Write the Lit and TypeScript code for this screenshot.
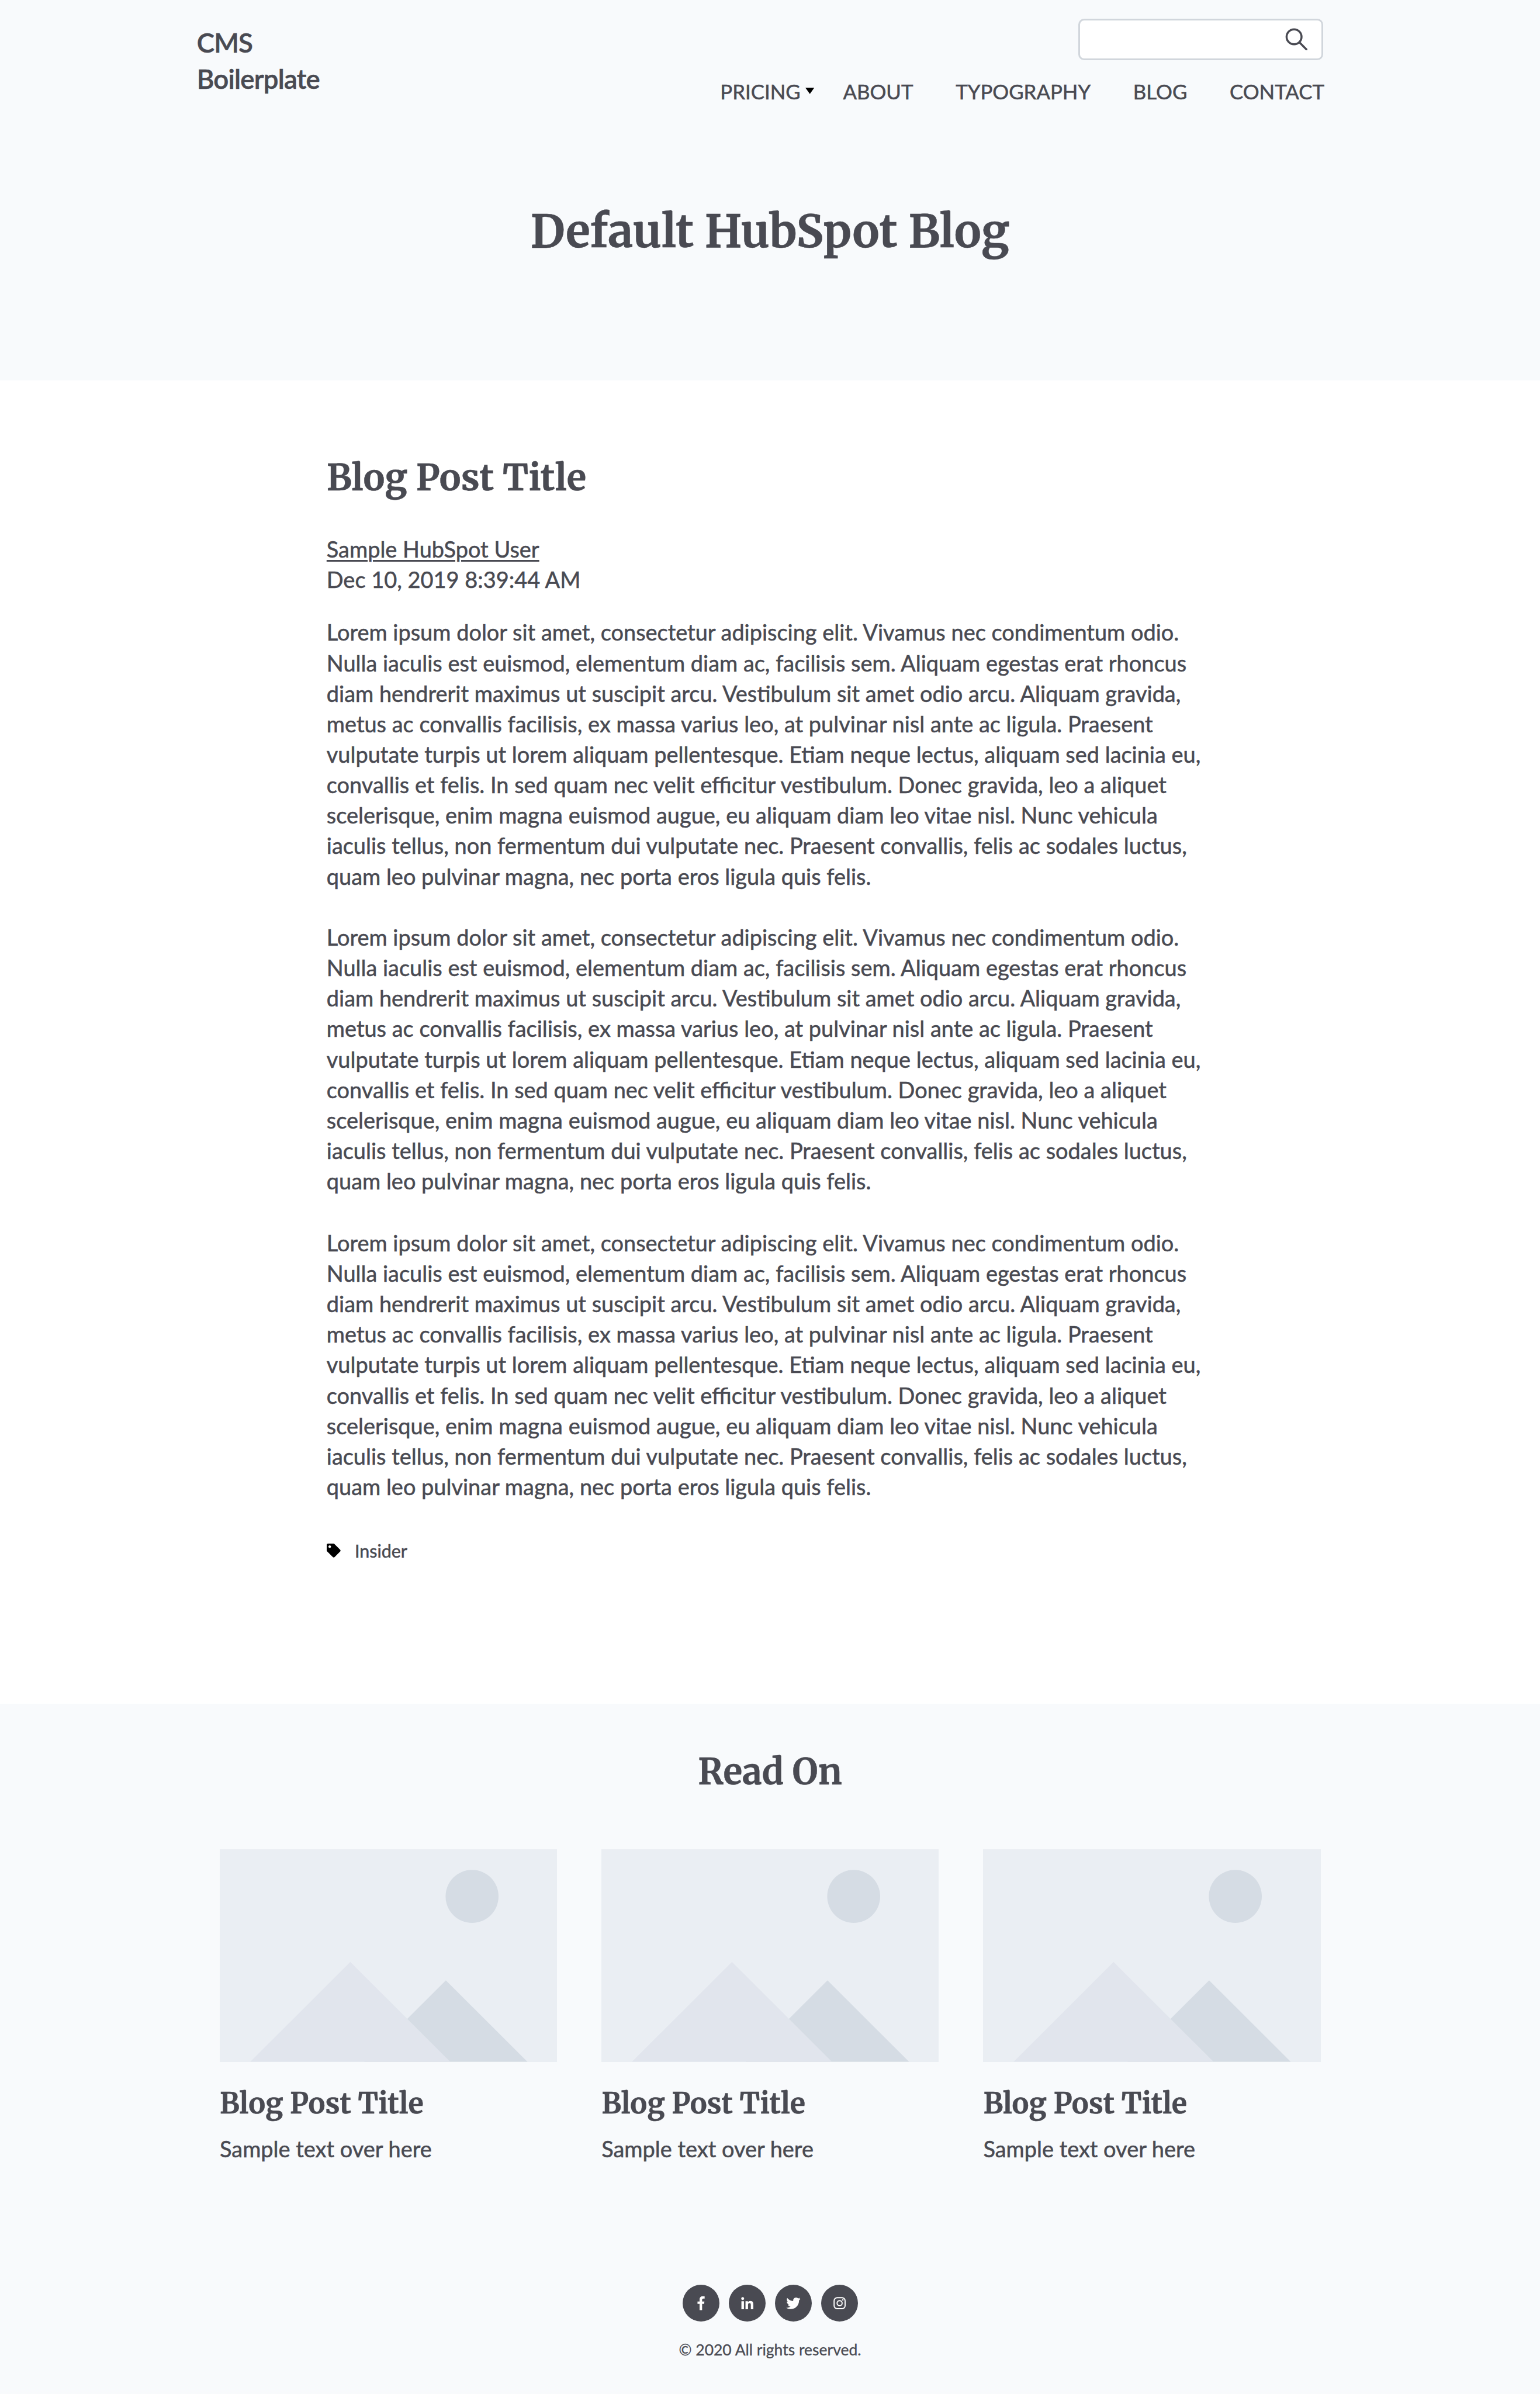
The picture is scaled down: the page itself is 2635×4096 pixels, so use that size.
import { LitElement, html, svg, css } from "lit";
import { customElement } from "lit/decorators.js";

const PARAGRAPH =
  "Lorem ipsum dolor sit amet, consectetur adipiscing elit. Vivamus nec condimentum odio. Nulla iaculis est euismod, elementum diam ac, facilisis sem. Aliquam egestas erat rhoncus diam hendrerit maximus ut suscipit arcu. Vestibulum sit amet odio arcu. Aliquam gravida, metus ac convallis facilisis, ex massa varius leo, at pulvinar nisl ante ac ligula. Praesent vulputate turpis ut lorem aliquam pellentesque. Etiam neque lectus, aliquam sed lacinia eu, convallis et felis. In sed quam nec velit efficitur vestibulum. Donec gravida, leo a aliquet scelerisque, enim magna euismod augue, eu aliquam diam leo vitae nisl. Nunc vehicula iaculis tellus, non fermentum dui vulputate nec. Praesent convallis, felis ac sodales luctus, quam leo pulvinar magna, nec porta eros ligula quis felis.";

const SOCIAL = [
  svg`<path transform="translate(32.2 25) scale(0.0586)" d="M76.7 512V283H0v-91h76.7v-71.7C76.7 42.4 124.3 0 193.8 0c33.3 0 61.9 2.5 70.2 3.6V85h-48.2c-37.8 0-45.1 18-45.1 44.3V192H256l-11.7 91h-73.6v229"/>`,
  svg`<path transform="translate(26.9 26.9) scale(0.0586)" d="M100.3 448H7.4V148.9h92.9zM53.8 108.1C24.1 108.1 0 83.5 0 53.8a53.8 53.8 0 0 1 107.6 0c0 29.7-24.1 54.3-53.8 54.3zM447.9 448h-92.7V302.4c0-34.7-.7-79.2-48.3-79.2-48.3 0-55.7 37.7-55.7 76.7V448h-92.8V148.9h89.1v40.8h1.3c12.4-23.5 42.7-48.3 87.9-48.3 94 0 111.3 61.9 111.3 142.3V448z"/>`,
  svg`<path transform="translate(24.4 24.8) scale(0.0602)" d="M459.37 151.716c.325 4.548.325 9.097.325 13.645 0 138.72-105.583 298.558-298.558 298.558-59.452 0-114.68-17.219-161.137-47.106 8.447.974 16.568 1.299 25.34 1.299 49.055 0 94.213-16.568 130.274-44.832-46.132-.975-84.792-31.188-98.112-72.772 6.498.974 12.995 1.624 19.818 1.624 9.421 0 18.843-1.3 27.614-3.573-48.081-9.747-84.143-51.98-84.143-102.985v-1.299c13.969 7.797 30.214 12.67 47.431 13.319-28.264-18.843-46.781-51.005-46.781-87.391 0-19.492 5.197-37.36 14.294-52.954 51.655 63.675 129.3 105.258 216.365 109.807-1.624-7.797-2.599-15.918-2.599-24.04 0-57.828 46.782-104.934 104.934-104.934 30.213 0 57.502 12.67 76.67 33.137 23.715-4.548 46.456-13.32 66.599-25.34-7.798 24.366-24.366 44.833-46.132 57.827 21.117-2.273 41.584-8.122 60.426-16.243-14.292 20.791-32.161 39.308-52.628 54.253z"/>`,
  svg`<g fill="none" stroke="#fff" stroke-width="2.4"><rect x="28.1" y="28.1" width="23.8" height="23.8" rx="6.6"/><circle cx="40" cy="40" r="5.5"/></g><circle cx="47" cy="33" r="1.6"/>`,
];

@customElement("app-root")
export class AppRoot extends LitElement {
  static styles = css`
    :host {
      display: block;
      width: 2635px;
      height: 4096px;
      overflow: hidden;
      background: #fff;
      color: #494a52;
      font-family: Lato, Carlito, sans-serif;
      font-size: 37.94px;
      line-height: 52.16px;
      -webkit-text-stroke: .55px #494a52;
    }
    * { box-sizing: border-box; margin: 0; }
    h1, h2, h3 {
      font-family: Merriweather, "Noto Serif", serif;
      font-weight: 700;
      -webkit-text-stroke-width: .45px;
    }
    .header { height: 651px; background: #f8fafc; }
    .bar {
      display: flex;
      justify-content: space-between;
      height: 330px;
      padding: 31.6px 369px 0 336.7px;
    }
    .logo {
      width: 230px;
      padding-top: 10.8px;
      font-size: 45.6px;
      font-weight: 600;
      line-height: 61.65px;
      letter-spacing: -.8px;
    }
    .tools { display: flex; flex-direction: column; align-items: flex-end; }
    .search {
      display: flex;
      justify-content: flex-end;
      align-items: center;
      width: 419px;
      height: 71px;
      margin-right: 2.5px;
      padding-right: 23.5px;
      background: #fff;
      border: 3px solid #d1d6dc;
      border-radius: 10px;
    }
    .search svg { width: 39.5px; height: 39.5px; margin-top: -1px; }
    .nav { display: flex; gap: 72.7px; margin-top: 28.6px; font-size: 34.8px; line-height: 52px; }
    .item { position: relative; }
    .caret { position: absolute; left: calc(100% + 8px); top: 19px; width: 15.4px; height: 10.8px; }
    .h1 { text-align: center; font-size: 77.4px; line-height: 108px; padding-top: 12.4px; }
    .post { height: 2264px; padding: 129.4px 0 0 558.8px; }
    .h2 { font-size: 61.8px; line-height: 74px; }
    .author { margin-top: 59.3px; }
    .user { text-decoration: underline; text-decoration-thickness: 3px; text-underline-offset: 3.6px; }
    .body { width: 1522px; margin-top: 38.4px; }
    .body p + p { margin-top: 52.16px; }
    .body p:last-child { margin-top: 53.4px; }
    .tag {
      display: flex;
      align-items: center;
      gap: 24px;
      margin-top: 55.8px;
      margin-left: .6px;
      font-size: 30.4px;
      line-height: 54px;
    }
    .tag svg { width: 23.7px; height: 23.7px; fill: #000; }
    .more { height: 1181px; background: #f8fafc; }
    .h2c { text-align: center; padding-top: 80px; font-size: 60.4px; line-height: 74px; }
    .cards { display: flex; gap: 76px; padding: 95.3px 0 0 376px; }
    .card { width: 577.2px; }
    .pic { display: block; width: 577.2px; height: 363.6px; background: #eaeef3; }
    .h3 { margin-top: 37.5px; font-size: 48.5px; line-height: 68px; }
    .text { margin-top: 17.4px; }
    .foot { display: flex; flex-direction: column; align-items: center; padding-top: 206px; }
    .social { display: flex; gap: 15.8px; margin-left: 1.5px; }
    .social svg { width: 63.23px; height: 63.23px; border-radius: 50%; background: #494a52; fill: #fff; }
    .copy { margin-top: 30.2px; font-size: 26.5px; line-height: 36px; -webkit-text-stroke-width: .3px; }
  `;

  render() {
    return html`
      <header class="header">
        <div class="bar">
          <div class="logo">CMS<br />Boilerplate</div>
          <div class="tools">
            <div class="search">
              <svg viewBox="0 0 50 50" fill="none" stroke="#494a52" stroke-width="4.4" stroke-linecap="round">
                <circle cx="20.5" cy="20.3" r="16.2" /><path d="M32.5 32.5L48 48.3" />
              </svg>
            </div>
            <nav class="nav">
              <span class="item">PRICING<svg class="caret" viewBox="0 0 10 7"><path d="M0 0h10L5 7z" /></svg></span>
              ${["ABOUT", "TYPOGRAPHY", "BLOG", "CONTACT"].map((t) => html`<span class="item">${t}</span>`)}
            </nav>
          </div>
        </div>
        <h1 class="h1">Default HubSpot Blog</h1>
      </header>
      <article class="post">
        <h2 class="h2">Blog Post Title</h2>
        <div class="author"><span class="user">Sample HubSpot User</span><br />Dec 10, 2019 8:39:44 AM</div>
        <div class="body">${[0, 1, 2].map(() => html`<p>${PARAGRAPH}</p>`)}</div>
        <div class="tag">
          <svg viewBox="0 0 512 512"><path d="M0 252.118V48C0 21.49 21.49 0 48 0h204.118a48 48 0 0 1 33.941 14.059l211.882 211.882c18.745 18.745 18.745 49.137 0 67.882L293.823 497.941c-18.745 18.745-49.137 18.745-67.882 0L14.059 286.059A48 48 0 0 1 0 252.118zM112 64c-26.51 0-48 21.49-48 48s21.49 48 48 48 48-21.49 48-48-21.49-48-48-48z" /></svg>
          <span>Insider</span>
        </div>
      </article>
      <section class="more">
        <h2 class="h2c">Read On</h2>
        <div class="cards">
          ${[0, 1, 2].map(() => html`
            <div class="card">
              <svg class="pic" viewBox="0 0 730 460" preserveAspectRatio="none">
                <circle cx="546" cy="102" r="57.3" fill="#d5dce4" />
                <path d="M489.3 283.7L665.8 460H312.8z" fill="#d5dce4" />
                <path d="M282.5 243.8L498.8 460H66.2z" fill="#e1e5ed" />
              </svg>
              <h3 class="h3">Blog Post Title</h3>
              <p class="text">Sample text over here</p>
            </div>`)}
        </div>
        <footer class="foot">
          <div class="social">${SOCIAL.map((i) => html`<svg viewBox="0 0 80 80">${i}</svg>`)}</div>
          <p class="copy">© 2020 All rights reserved.</p>
        </footer>
      </section>
    `;
  }
}
